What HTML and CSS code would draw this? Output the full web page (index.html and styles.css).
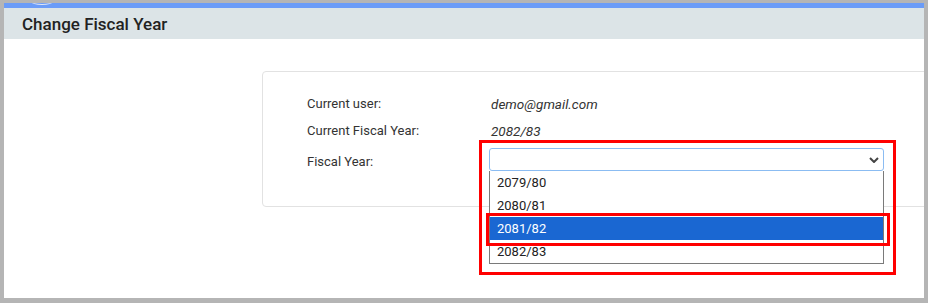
FILE: index.html
```html
<!DOCTYPE html>
<html>
<head>
    <meta charset="UTF-8">
    <title>Change Fiscal Year</title>
    <link rel="stylesheet" href="styles.css">
</head>
<body>
    <!-- window frame -->
    <div class="frame">
        <div class="top-strip">
            <span class="logo-ghost"></span>
        </div>

        <!-- page header -->
        <div class="page-header">
            <h1>Change Fiscal Year</h1>
        </div>

        <!-- form card -->
        <div class="content">
            <div class="card">
                <div class="row">
                    <div class="label">Current user:</div>
                    <div class="value">demo@gmail.com</div>
                </div>
                <div class="row">
                    <div class="label">Current Fiscal Year:</div>
                    <div class="value">2082/83</div>
                </div>
                <div class="row row-select">
                    <div class="label label-select">Fiscal Year:</div>
                    <div class="select-wrap">
                        <div class="select">
                            <svg class="chevron" width="10" height="6" viewBox="0 0 10 6">
                                <path d="M1 1 L5 5 L9 1" fill="none" stroke="#444" stroke-width="2"/>
                            </svg>
                        </div>
                        <!-- open dropdown -->
                        <ul class="options">
                            <li>2079/80</li>
                            <li>2080/81</li>
                            <li class="active">2081/82</li>
                            <li>2082/83</li>
                        </ul>
                        <!-- annotation boxes -->
                        <div class="mark mark-outer"></div>
                        <div class="mark mark-inner"></div>
                    </div>
                </div>
            </div>
        </div>
    </div>
</body>
</html>
```

FILE: styles.css
```css
/* page */
body {
    margin: 0;
    padding: 3px 4px 5px 4px;
    background: #b5b5b5;
    font-family: Roboto, "Liberation Sans", sans-serif;
    height: 303px;
    box-sizing: border-box;
}

.frame {
    height: 100%;
    background: #fff;
    overflow: hidden;
}

/* top blue strip */
.top-strip {
    height: 5px;
    background: #6b9cf8;
    position: relative;
}

.logo-ghost {
    position: absolute;
    left: 27px;
    top: -5px;
    width: 22px;
    height: 6px;
    border-bottom: 1px solid #dfe6f5;
    border-radius: 50%;
}

/* header */
.page-header {
    height: 31px;
    background: #dce4e7;
    padding-left: 18px;
    display: flex;
    align-items: center;
}

.page-header h1 {
    margin: 0;
    font-size: 17px;
    font-weight: 500;
    color: #222;
}

/* content */
.content {
    padding: 32px 0 0 258px;
}

.card {
    width: 800px;
    height: 136px;
    box-sizing: border-box;
    border: 1px solid #e2e2e2;
    border-radius: 4px;
    padding: 18px 0 0 44px;
}

.row {
    display: flex;
    height: 27px;
    align-items: center;
    font-size: 13px;
    color: #333;
}

.label {
    width: 182px;
}

.value {
    font-style: italic;
    font-size: 13.5px;
    padding-left: 2px;
}

.row-select {
    margin-top: 4px;
    height: 23px;
    align-items: flex-start;
}

.label-select {
    padding-top: 4px;
    line-height: 20px;
}

/* select box */
.select-wrap {
    position: relative;
    width: 395px;
}

.select {
    height: 23px;
    box-sizing: border-box;
    border: 1px solid #8bbcf2;
    border-radius: 3px;
    position: relative;
}

.chevron {
    position: absolute;
    right: 4px;
    top: 8px;
}

/* dropdown list */
.options {
    position: absolute;
    left: 0;
    top: 23px;
    width: 395px;
    box-sizing: border-box;
    margin: 0;
    padding: 0;
    list-style: none;
    background: #fff;
    border: 1px solid #7a7a7a;
    border-top: none;
    font-size: 13px;
    color: #222;
}

.options li {
    height: 23px;
    line-height: 23px;
    padding-left: 7px;
}

.options li.active {
    background: #1a67d2;
    color: #fff;
}

/* red annotation boxes */
.mark {
    position: absolute;
    border: 3px solid #ff0000;
    box-sizing: border-box;
}

.mark-outer {
    left: -10px;
    top: -8px;
    width: 417px;
    height: 135px;
}

.mark-inner {
    left: -3px;
    top: 65px;
    width: 404px;
    height: 33px;
}
```
